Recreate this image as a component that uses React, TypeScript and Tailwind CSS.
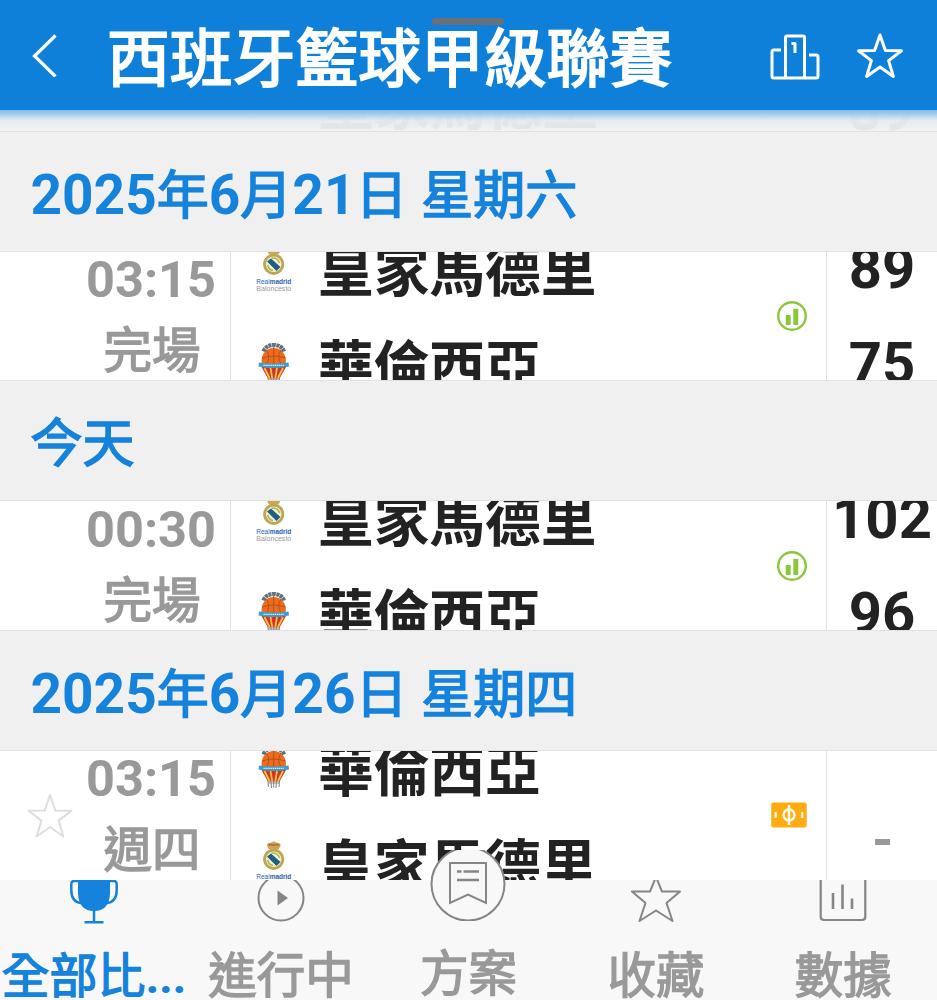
type Team = "madrid" | "valencia";

type Match = {
  time: string;
  status: string;
  teams: [Team, Team];
  scores: [string, string] | null;
};

type MatchDay = {
  date: string;
  match: Match;
};

const teamNames: Record<Team, string> = {
  madrid: "皇家馬德里",
  valencia: "華倫西亞",
};

const days: MatchDay[] = [
  {
    date: "2025年6月21日 星期六",
    match: { time: "03:15", status: "完場", teams: ["madrid", "valencia"], scores: ["89", "75"] },
  },
  {
    date: "今天",
    match: { time: "00:30", status: "完場", teams: ["madrid", "valencia"], scores: ["102", "96"] },
  },
  {
    date: "2025年6月26日 星期四",
    match: { time: "03:15", status: "週四", teams: ["valencia", "madrid"], scores: null },
  },
];

const starPath = "M24 3 L29.4 18.6 L45.5 18.8 L32.6 28.6 L37.4 44.5 L24 35 L10.6 44.5 L15.4 28.6 L2.5 18.8 L18.6 18.6 Z";

function Star({ className, strokeWidth = 2 }: { className: string; strokeWidth?: number }) {
  return (
    <svg viewBox="0 0 48 48" className={className} fill="none" stroke="currentColor" strokeWidth={strokeWidth} strokeLinejoin="round">
      <path d={starPath} />
    </svg>
  );
}

function MadridLogo() {
  return (
    <svg viewBox="0 0 36 46" className="h-[46px] w-9">
      <path d="M13 8.5 L10.800 4.500 Q11 2 14.500 1.700 L17.700 0.300 L21 1.700 Q24.500 2 24.700 4.500 L22.500 8.500 Z" fill="#cda656" />
      <path d="M12.500 4.500 Q15 2.500 17.700 4.500 Q20.500 2.500 23 4.500" stroke="#b5643c" strokeWidth="1.400" fill="none" />
      <circle cx="17.700" cy="18.300" r="9.200" fill="#f4f1cd" stroke="#bda655" strokeWidth="2.800" />
      <path d="M11 15.500 L15 12.500 L24.500 21 L20.500 25 Z" fill="#1f5c86" />
      <path d="M15.500 12 Q22 11.500 23.500 17 M11.500 19 Q13 24 17 24.500" stroke="#a8b64d" strokeWidth="1.500" fill="none" />
      <text x="0.300" y="38.300" fontSize="7.600" textLength="35" lengthAdjust="spacingAndGlyphs" fontFamily="Liberation Sans, sans-serif" fill="#2a63a8">
        Real<tspan fontWeight="bold">madrid</tspan>
      </text>
      <text x="0.300" y="44.800" fontSize="7.200" textLength="35" lengthAdjust="spacingAndGlyphs" fontFamily="Liberation Sans, sans-serif" fill="#999999">
        Baloncesto
      </text>
    </svg>
  );
}

function ValenciaLogo() {
  return (
    <svg viewBox="0 0 36 46" className="h-[46px] w-9">
      <path d="M7.500 9.500 Q10 3 17.700 3 Q25.500 3 28 9.500" fill="none" stroke="#5f6f80" strokeWidth="4.200" strokeDasharray="3.200 0.600" />
      <path d="M5.700 21 A12.200 12.800 0 1 1 29.700 21 Q17.700 24 5.700 21 Z" fill="#ed6b1c" />
      <path d="M17.700 5 V22 M6 16 Q17.700 12 29.500 16 M10.500 8 Q15 15 10.500 22 M25 8 Q20.500 15 25 22" stroke="#b04f1c" strokeWidth="0.900" fill="none" />
      <path d="M5.500 25 H30 L23.500 36.500 H12 Z" fill="#d5302b" />
      <path d="M8.500 26 L13.500 36 M14.500 26 L16.200 36 M21 26 L19.300 36 M27 26 L22 36" stroke="#f5c53a" strokeWidth="1.800" />
      <path d="M3 20.500 Q17.700 22.500 32.500 20.500 L33 24.500 Q17.700 27.500 2.500 24.500 Z" fill="#3a9fcd" />
      <path d="M7.500 23.300 H28" stroke="#d7eef7" strokeWidth="1.300" strokeDasharray="1.300 0.600" />
      <path d="M12 36 L12.500 42 M15 36 L15.500 43 M17.700 36 V42.500 M20.500 36 L20 43 M23.500 36 L23 42 M12 38 H23.500" stroke="#858a90" strokeWidth="1.100" fill="none" />
    </svg>
  );
}

function StatsBadge() {
  return (
    <svg viewBox="0 0 32 32" className="mr-[18px] size-8">
      <circle cx="16" cy="16" r="13.800" fill="none" stroke="#8cc63a" strokeWidth="2.400" />
      <rect x="9.700" y="15" width="5" height="10" rx="0.800" fill="#8cc63a" />
      <rect x="17.300" y="8.700" width="5" height="16.300" rx="0.800" fill="#8cc63a" />
    </svg>
  );
}

function TicketBadge() {
  return (
    <svg viewBox="0 0 36 26" className="mr-[19px] h-[26px] w-9">
      <rect x="0.300" y="0.500" width="35.400" height="25" rx="2" fill="#ffab12" />
      <ellipse cx="18" cy="13" rx="5.500" ry="5.500" fill="none" stroke="#fffbe8" strokeWidth="2.400" />
      <path d="M18 3 V23" stroke="#fffbe8" strokeWidth="2.600" />
      <path d="M4.700 10 V16 M31.300 10 V16" stroke="#fffbe8" strokeWidth="2.200" />
    </svg>
  );
}

function Header() {
  return (
    <header className="relative flex h-[110px] shrink-0 items-center bg-[#0f80da] text-white">
      <div className="absolute left-[432px] top-[18px] h-[7px] w-[72px] rounded-sm bg-[#69707a]" />
      <svg viewBox="0 0 26 44" className="ml-[32px] h-11 w-[26px]" fill="none" stroke="currentColor" strokeWidth="3.200">
        <path d="M23.500 2.500 L2.500 23 L23.500 43.500" />
      </svg>
      <h1 className="ml-[49px] flex-1 whitespace-nowrap pt-[10px] text-[62.8px] leading-none [-webkit-text-stroke:2px_currentColor]">西班牙籃球甲級聯賽</h1>
      <svg viewBox="0 0 50 46" className="relative top-[2px] h-[46px] w-[50px]" fill="none" stroke="currentColor" strokeWidth="3" strokeLinejoin="round">
        <path d="M15.500 44 V3.500 Q15.500 2 17 2 H33 Q34.500 2 34.500 3.500 V44" />
        <path d="M11 16 H4 Q2 16 2 18 V42 Q2 44 4 44 H46 Q48 44 48 42 V23 Q48 21 46 21 H39" />
        <path d="M21.500 9.500 H25 V19" />
      </svg>
      <Star className="relative top-px ml-[36px] mr-[33px] size-[48px]" strokeWidth={3} />
    </header>
  );
}

// Previous row, fading out under the header
function ScrolledRow() {
  return (
    <div className="relative flex h-[20.5px] shrink-0 items-end overflow-hidden bg-[#f2f2f2] text-[#e5e5e5]">
      <div className="absolute inset-0 bg-linear-to-b from-[#7fb8e8] via-[#dde9f3]/70 to-transparent" />
      <span className="h-[68px] w-[318px] pl-[103px] text-[49px] leading-[49px]">完場</span>
      <span className="h-[54px] w-[508px] text-[56px] font-bold leading-[56px]">皇家馬德里</span>
      <span className="h-[48px] w-[110px] text-center text-[57px] font-bold leading-[56px]">89</span>
    </div>
  );
}

function DateHeading({ date }: { date: string }) {
  // Latin digits are set larger and bolder than the Chinese characters
  const parts = date.split(/([\d ]+)/).filter(Boolean);

  return (
    <h2 className="flex h-[121px] shrink-0 items-baseline whitespace-pre border-y border-[#e2e2e2] bg-[#f0f0f0] pl-[30.5px] text-[#1582dc]">
      {parts.map((part, index) =>
        /[\d ]/.test(part) ? (
          <span key={index} className="text-[55px] font-bold leading-[127px]">{part}</span>
        ) : (
          <span key={index} className="text-[52px] leading-[127px] [-webkit-text-stroke:1.6px_currentColor]">{part}</span>
        ),
      )}
    </h2>
  );
}

function MatchRow({ match }: { match: Match }) {
  return (
    <div className="flex h-[128.7px] shrink-0 overflow-hidden bg-white">
      <div className="flex w-[231px] shrink-0 items-center border-r border-[#e2e2e2]">
        <div className="w-[72px] pl-[26px] pt-[2px]">
          {!match.scores && <Star className="size-12 text-[#dedede]" />}
        </div>
        <div className="flex w-[158px] flex-col items-center text-[#999999]">
          <span className="relative top-[-1px] h-[71px] text-[50.5px] font-bold leading-[71px]">{match.time}</span>
          <span className="h-[71px] pl-[2px] text-[48.5px] leading-[71px] [-webkit-text-stroke:1.4px_currentColor]">{match.status}</span>
        </div>
      </div>

      <div className="flex w-[596px] shrink-0 items-center border-r border-[#e2e2e2]">
        <div className="flex-1 pt-[2px]">
          {match.teams.map((team) => (
            <div key={team} className="flex h-[95.5px] items-center gap-[26px] pl-[25px]">
              {team === "madrid" ? <MadridLogo /> : <ValenciaLogo />}
              <span className="pt-[8px] text-[55.7px] font-bold leading-none text-[#222222]">{teamNames[team]}</span>
            </div>
          ))}
        </div>
        {match.scores ? <StatsBadge /> : <TicketBadge />}
      </div>

      <div className="flex flex-1 flex-col items-center justify-center text-[58px] font-bold text-[#222222]">
        {match.scores ? (
          match.scores.map((score) => (
            <span key={score} className="h-[95px] shrink-0 leading-[95px]">{score}</span>
          ))
        ) : (
          <span className="mt-[53px] h-[6px] w-[15px] bg-[#999999]" aria-label="-" />
        )}
      </div>
    </div>
  );
}

function TrophyIcon() {
  return (
    <svg viewBox="0 0 48 45" className="h-[45px] w-12" fill="none" stroke="currentColor" strokeWidth="2.500">
      <path d="M8 0 H40 V14 Q39 31 24 31 Q9 31 8 14 Z" fill="currentColor" stroke="none" />
      <path d="M8 1 H4 Q1.300 1 1.300 4 V10 Q1.300 22 11 23 M40 1 H44 Q46.700 1 46.700 4 V10 Q46.700 22 37 23" />
      <path d="M24 30 V42 M14.500 42.300 H33.500" />
    </svg>
  );
}

function PlayIcon() {
  return (
    <svg viewBox="0 0 48 45" className="h-[45px] w-12">
      <circle cx="24" cy="18" r="22.500" fill="none" stroke="currentColor" strokeWidth="2" />
      <path d="M20.500 10.500 L31 18 L20.500 25.500 Z" fill="currentColor" />
    </svg>
  );
}

function PlanIcon() {
  return (
    <svg viewBox="0 0 76 71" className="absolute left-1/2 top-[-30px] h-[71px] w-[76px] -translate-x-1/2" fill="none" stroke="currentColor" strokeWidth="2">
      <circle cx="38" cy="34" r="36.500" fill="#f8f8f8" />
      <path d="M20 13 H56 V53 L38 44.500 L20 53 Z" />
      <path d="M27 21.500 H31.500 M33.500 21.500 H49 M27 30 H49" strokeWidth="2.500" />
    </svg>
  );
}

function StatsIcon() {
  return (
    <svg viewBox="0 0 48 45" className="h-[45px] w-12" fill="none" stroke="currentColor" strokeWidth="2.200">
      <path d="M1.700 -3 V36.500 Q1.700 40 5 40 H43 Q46.300 40 46.300 36.500 V-3" />
      <path d="M14 13 V29 M23.500 4.500 V29 M33 18.500 V29" strokeWidth="2.600" />
    </svg>
  );
}

const tabs = [
  { label: "全部比...", icon: <TrophyIcon />, active: true },
  { label: "進行中", icon: <PlayIcon /> },
  { label: "方案", icon: <PlanIcon />, raised: true },
  {
    label: "收藏",
    icon: (
      <svg viewBox="0 0 50 45" className="h-[45px] w-[50px]" fill="none" stroke="currentColor" strokeWidth="2" strokeLinejoin="round">
        <path d="M25 -3 L31 11.500 H49 L35.500 23 L41.500 41 L25 30.500 L8.500 41 L14.500 23 L1 11.500 H19 Z" />
      </svg>
    ),
  },
  { label: "數據", icon: <StatsIcon /> },
];

function TabBar() {
  return (
    <nav className="relative grid h-[120.4px] shrink-0 grid-cols-5 bg-[#f8f8f8]">
      {tabs.map((tab) => (
        <div key={tab.label} className={`relative flex flex-col items-center ${tab.active ? "text-[#1582dc]" : "text-[#858585]"}`}>
          <div className="h-[45px]">{tab.icon}</div>
          <span
            className={`whitespace-nowrap leading-none [-webkit-text-stroke:1.4px_currentColor] ${tab.raised ? "mt-[26px]" : "mt-[28px]"} ${
              tab.active ? "text-[48px]" : "text-[48.5px] text-[#999999]"
            }`}
          >
            {tab.active ? (
              <>
                全部比<span className="font-bold tracking-[-0.5px] [-webkit-text-stroke:0px]">...</span>
              </>
            ) : (
              tab.label
            )}
          </span>
        </div>
      ))}
    </nav>
  );
}

export default function App() {
  return (
    <div className="flex h-[1000px] w-[937px] flex-col overflow-hidden bg-[#f8f8f8] font-[Roboto,'Noto_Sans_CJK_TC',sans-serif]">
      <Header />
      <ScrolledRow />
      {days.map((day) => (
        <section key={day.date} className="shrink-0">
          <DateHeading date={day.date} />
          <MatchRow match={day.match} />
        </section>
      ))}
      <TabBar />
    </div>
  );
}
